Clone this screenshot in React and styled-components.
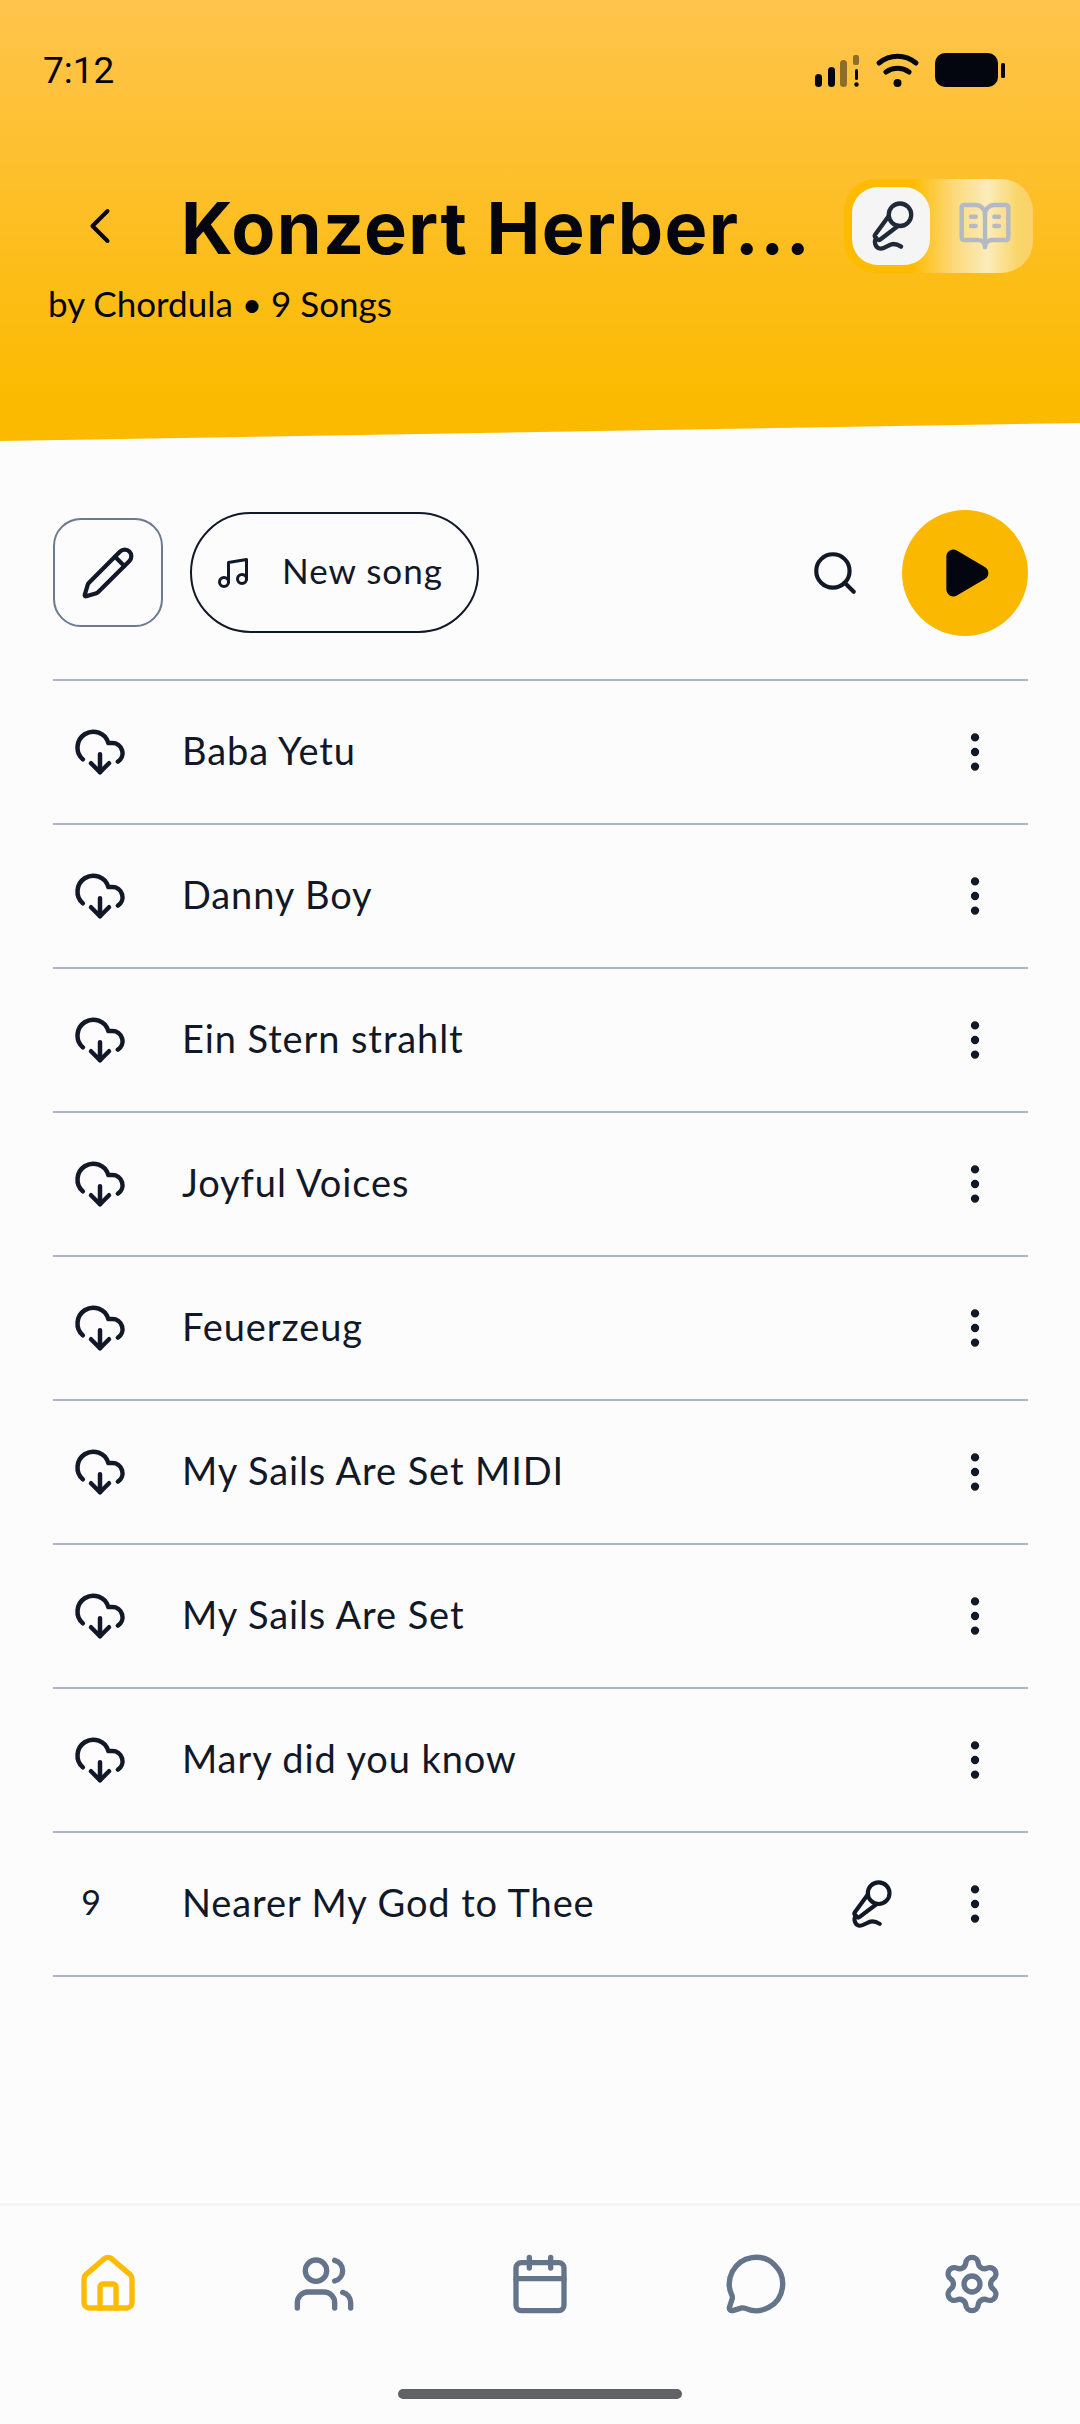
import React from "react";
import styled, { createGlobalStyle } from "styled-components";
import {
  BookOpenText,
  Calendar,
  ChevronLeft,
  CloudDownload,
  EllipsisVertical,
  House,
  MessageCircle,
  MicVocal,
  Music,
  Pencil,
  Play,
  Search,
  Settings,
  Users,
} from "lucide-react";

const GlobalStyle = createGlobalStyle`
  html, body {
    margin: 0;
    padding: 0;
    background: #fcfcfc;
  }
  * {
    box-sizing: border-box;
  }
`;

const Page = styled.div`
  width: 1080px;
  height: 2424px;
  display: flex;
  flex-direction: column;
  background: #fcfcfc;
  color: #111827;
  font-family: "Lato", "Noto Sans", sans-serif;
  overflow: hidden;
`;

const Header = styled.header`
  height: 441px;
  flex-shrink: 0;
  padding-top: 53px;
  background: linear-gradient(180deg, #ffc44d 0%, #fbba00 92%);
  clip-path: polygon(0 0, 100% 0, 100% 423px, 0 441px);
  color: #03060f;
`;

const StatusBar = styled.div`
  height: 34px;
  padding-left: 43px;
  display: flex;
  justify-content: space-between;
  align-items: center;
`;

const Clock = styled.span`
  padding-top: 2px;
  font-family: "Roboto", sans-serif;
  font-size: 37px;
  line-height: 34px;
`;

const StatusIcons = styled.svg`
  display: block;
  margin-right: 75px;
`;

const TitleRow = styled.div`
  height: 94px;
  margin-top: 92px;
  padding: 0 47px 0 70px;
  display: flex;
  align-items: center;
`;

const BackButton = styled.div`
  width: 60px;
  height: 60px;
  margin-right: 51px;
  display: flex;
  align-items: center;
  justify-content: center;
  flex-shrink: 0;
`;

const Title = styled.h1`
  margin: 0;
  flex: 1;
  padding-top: 4px;
  font-family: "Inter", sans-serif;
  font-size: 72px;
  line-height: 90px;
  font-weight: 700;
  letter-spacing: 1.35px;
  white-space: nowrap;
`;

const Toggle = styled.div`
  width: 189px;
  height: 94px;
  padding: 8px;
  display: flex;
  align-items: center;
  border-radius: 32px;
  flex-shrink: 0;
  background: linear-gradient(
    90deg,
    #ffbb00 0%,
    #ffbb00 36%,
    #fcd97a 58%,
    #fbecbb 76%,
    #fad568 92%,
    #f9d26a 100%
  );
`;

const ToggleItem = styled.div`
  width: 78px;
  height: 78px;
  margin-right: ${(p) => (p.$active ? "16px" : "0")};
  display: flex;
  align-items: center;
  justify-content: center;
  border-radius: 26px;
  background: ${(p) => (p.$active ? "#f5f5f5" : "transparent")};
  color: ${(p) => (p.$active ? "#1f2937" : "#b4b9c6")};
`;

const Subtitle = styled.div`
  margin: 8px 0 0 48px;
  font-size: 35px;
  line-height: 44px;
`;

const Toolbar = styled.div`
  height: 125px;
  margin-top: 69px;
  padding: 0 52px 0 53px;
  display: flex;
  align-items: center;
  flex-shrink: 0;
`;

const EditButton = styled.div`
  width: 110px;
  height: 109px;
  margin-right: 27px;
  display: flex;
  align-items: center;
  justify-content: center;
  border: 2px solid #6b7a90;
  border-radius: 28px;
`;

const NewSongButton = styled.div`
  width: 289px;
  height: 121px;
  padding-left: 23px;
  display: flex;
  align-items: center;
  border: 2.5px solid #111827;
  border-radius: 61px;
  font-size: 35px;
  letter-spacing: 1px;
`;

const NewSongLabel = styled.span`
  margin-left: 31px;
  padding-bottom: 6px;
`;

const SearchButton = styled.div`
  margin-left: auto;
  margin-right: 42px;
  display: flex;
`;

const PlayButton = styled.div`
  width: 126px;
  height: 126px;
  display: flex;
  align-items: center;
  justify-content: center;
  border-radius: 50%;
  background: #fbb800;
  color: #03060f;
`;

const SongList = styled.ul`
  list-style: none;
  margin: 44px 52px 0 53px;
  padding: 0;
  border-top: 2px solid #adb5c6;
`;

const SongRow = styled.li`
  height: 144px;
  padding: 0 28px 0 0;
  display: flex;
  align-items: center;
  border-bottom: 2px solid #adb5c6;
`;

const Leading = styled.div`
  width: 94px;
  margin-right: 35px;
  display: flex;
  align-items: center;
  justify-content: center;
`;

const SongNumber = styled.span`
  padding: 0 18px 6px 0;
  font-size: 34px;
`;

const SongName = styled.span`
  flex: 1;
  padding-bottom: 4px;
  font-size: 38px;
  letter-spacing: 0.9px;
`;

const ActiveMic = styled.div`
  margin-right: 54px;
  display: flex;
`;

const MenuButton = styled.div`
  width: 50px;
  display: flex;
`;

const BottomNav = styled.nav`
  margin-top: auto;
  height: 221px;
  padding-top: 46px;
  display: flex;
  flex-direction: column;
  border-top: 3px solid #f4f4f4;
`;

const NavIcons = styled.div`
  display: grid;
  grid-template-columns: repeat(5, 216px);
`;

const NavItem = styled.div`
  display: flex;
  justify-content: center;
  color: ${(p) => (p.$active ? "#ffbb00" : "#64748b")};
`;

const HomeIndicator = styled.div`
  width: 284px;
  height: 10px;
  margin: 73px auto 0;
  border-radius: 5px;
  background: #616266;
`;

const songs = [
  "Baba Yetu",
  "Danny Boy",
  "Ein Stern strahlt",
  "Joyful Voices",
  "Feuerzeug",
  "My Sails Are Set MIDI",
  "My Sails Are Set",
  "Mary did you know",
  "Nearer My God to Thee",
];

const navIcons = [House, Users, Calendar, MessageCircle, Settings];

// cell bars, wifi and battery share one drawing
const StatusGlyphs = () => (
  <StatusIcons width="190" height="34" viewBox="815 53 190 34" fill="#03060f">
    <rect x="815" y="74" width="7" height="13" rx="3.5" />
    <rect x="828" y="67" width="7" height="20" rx="3.5" />
    <rect x="840" y="60" width="7" height="27" rx="3.5" opacity="0.45" />
    <rect x="853" y="55" width="6" height="10" rx="2" opacity="0.45" />
    <rect x="855" y="69" width="3" height="11" rx="1.5" />
    <circle cx="856.5" cy="84.5" r="2.2" />
    <path
      d="M879 63c11-9 26-9 37 0M886 72c7-5 16-5 23 0"
      fill="none"
      stroke="#03060f"
      strokeWidth="5"
      strokeLinecap="round"
    />
    <circle cx="897.5" cy="83" r="4" />
    <rect x="935" y="53" width="63" height="34" rx="10" />
    <rect x="1001" y="63" width="4" height="15" rx="1.5" />
  </StatusIcons>
);

const App = () => {
  return (
    <Page>
      <GlobalStyle />
      <Header>
        <StatusBar>
          <Clock>7:12</Clock>
          <StatusGlyphs />
        </StatusBar>
        <TitleRow>
          <BackButton>
            <ChevronLeft size={74} strokeWidth={1.6} />
          </BackButton>
          <Title>Konzert Herber...</Title>
          <Toggle>
            <ToggleItem $active>
              <MicVocal size={54} strokeWidth={1.9} />
            </ToggleItem>
            <ToggleItem>
              <BookOpenText size={56} strokeWidth={1.9} />
            </ToggleItem>
          </Toggle>
        </TitleRow>
        <Subtitle>by Chordula • 9 Songs</Subtitle>
      </Header>

      <Toolbar>
        <EditButton>
          <Pencil size={56} strokeWidth={1.8} />
        </EditButton>
        <NewSongButton>
          <Music size={36} strokeWidth={2} />
          <NewSongLabel>New song</NewSongLabel>
        </NewSongButton>
        <SearchButton>
          <Search size={50} strokeWidth={2} />
        </SearchButton>
        <PlayButton>
          <Play size={56} fill="currentColor" strokeWidth={2} />
        </PlayButton>
      </Toolbar>

      <SongList>
        {songs.map((name, i) => (
          <SongRow key={name}>
            <Leading>
              {i === songs.length - 1 ? (
                <SongNumber>{i + 1}</SongNumber>
              ) : (
                <CloudDownload size={54} strokeWidth={2} />
              )}
            </Leading>
            <SongName>{name}</SongName>
            {i === songs.length - 1 && (
              <ActiveMic>
                <MicVocal size={52} strokeWidth={1.9} />
              </ActiveMic>
            )}
            <MenuButton>
              <EllipsisVertical size={50} strokeWidth={2} />
            </MenuButton>
          </SongRow>
        ))}
      </SongList>

      <BottomNav>
        <NavIcons>
          {navIcons.map((Icon, i) => (
            <NavItem key={i} $active={i === 0}>
              <Icon size={64} strokeWidth={2} />
            </NavItem>
          ))}
        </NavIcons>
        <HomeIndicator />
      </BottomNav>
    </Page>
  );
};

export default App;
